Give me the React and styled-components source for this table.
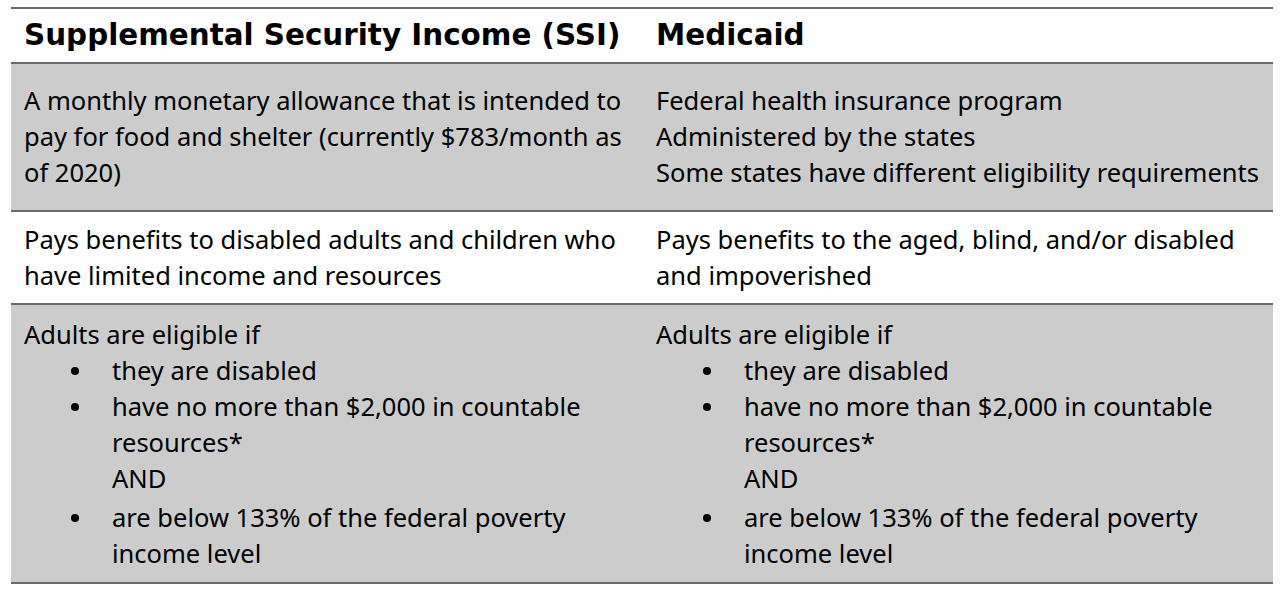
import React from 'react';
import styled, { createGlobalStyle } from 'styled-components';

const GlobalStyle = createGlobalStyle`
  html, body {
    margin: 0;
    padding: 0;
    background: #ffffff;
  }
  body {
    font-family: "Noto Sans", Lato, "Liberation Sans", sans-serif;
    color: #000;
  }
`;

const Table = styled.div`
  width: 1262px;
  margin: 7px 0 0 11px;
  border-bottom: 2px solid #6a6a6a;
`;

const Row = styled.div`
  display: grid;
  grid-template-columns: 632px 630px;
  border-top: 2px solid #6a6a6a;
  background: ${(p) => (p.$shaded ? '#cccccc' : '#ffffff')};
  padding: ${(p) => p.$padTop}px 0 ${(p) => p.$padBottom}px;
`;

const Cell = styled.div`
  padding: 0 13px;
  font-size: 25.5px;
  line-height: 36px;
  white-space: nowrap;
`;

const HeadCell = styled(Cell)`
  font-family: "DejaVu Sans", "Noto Sans", sans-serif;
  font-size: 29.4px;
  font-weight: 700;
  line-height: 53px;
`;

const Line = styled.div``;

const Bullets = styled.ul`
  list-style: none;
  margin: 0;
  padding: 0 0 0 88px;
`;

const Bullet = styled.li`
  position: relative;
  margin-top: ${(p) => (p.$gap ? '3px' : '0')};

  &::before {
    content: '';
    position: absolute;
    left: -41px;
    top: 15px;
    width: 8px;
    height: 8px;
    border-radius: 50%;
    background: #000;
  }
`;

const Eligibility = () => (
  <Cell>
    <Line>Adults are eligible if</Line>
    <Bullets>
      <Bullet>they are disabled</Bullet>
      <Bullet>
        have no more than $2,000 in countable
        <br />
        resources*
        <br />
        AND
      </Bullet>
      <Bullet $gap>
        are below 133% of the federal poverty
        <br />
        income level
      </Bullet>
    </Bullets>
  </Cell>
);

const App = () => {
  return (
    <>
      <GlobalStyle />
      <Table>
        <Row $padTop={0} $padBottom={0}>
          <HeadCell>Supplemental Security Income (SSI)</HeadCell>
          <HeadCell>Medicaid</HeadCell>
        </Row>
        <Row $shaded $padTop={18} $padBottom={20}>
          <Cell>
            A monthly monetary allowance that is intended to
            <br />
            pay for food and shelter (currently $783/month as
            <br />
            of 2020)
          </Cell>
          <Cell>
            <Line>Federal health insurance program</Line>
            <Line>Administered by the states</Line>
            <Line>Some states have different eligibility requirements</Line>
          </Cell>
        </Row>
        <Row $padTop={9} $padBottom={10}>
          <Cell>
            Pays benefits to disabled adults and children who
            <br />
            have limited income and resources
          </Cell>
          <Cell>
            Pays benefits to the aged, blind, and/or disabled
            <br />
            and impoverished
          </Cell>
        </Row>
        <Row $shaded $padTop={11} $padBottom={11}>
          <Eligibility />
          <Eligibility />
        </Row>
      </Table>
    </>
  );
};

export default App;
